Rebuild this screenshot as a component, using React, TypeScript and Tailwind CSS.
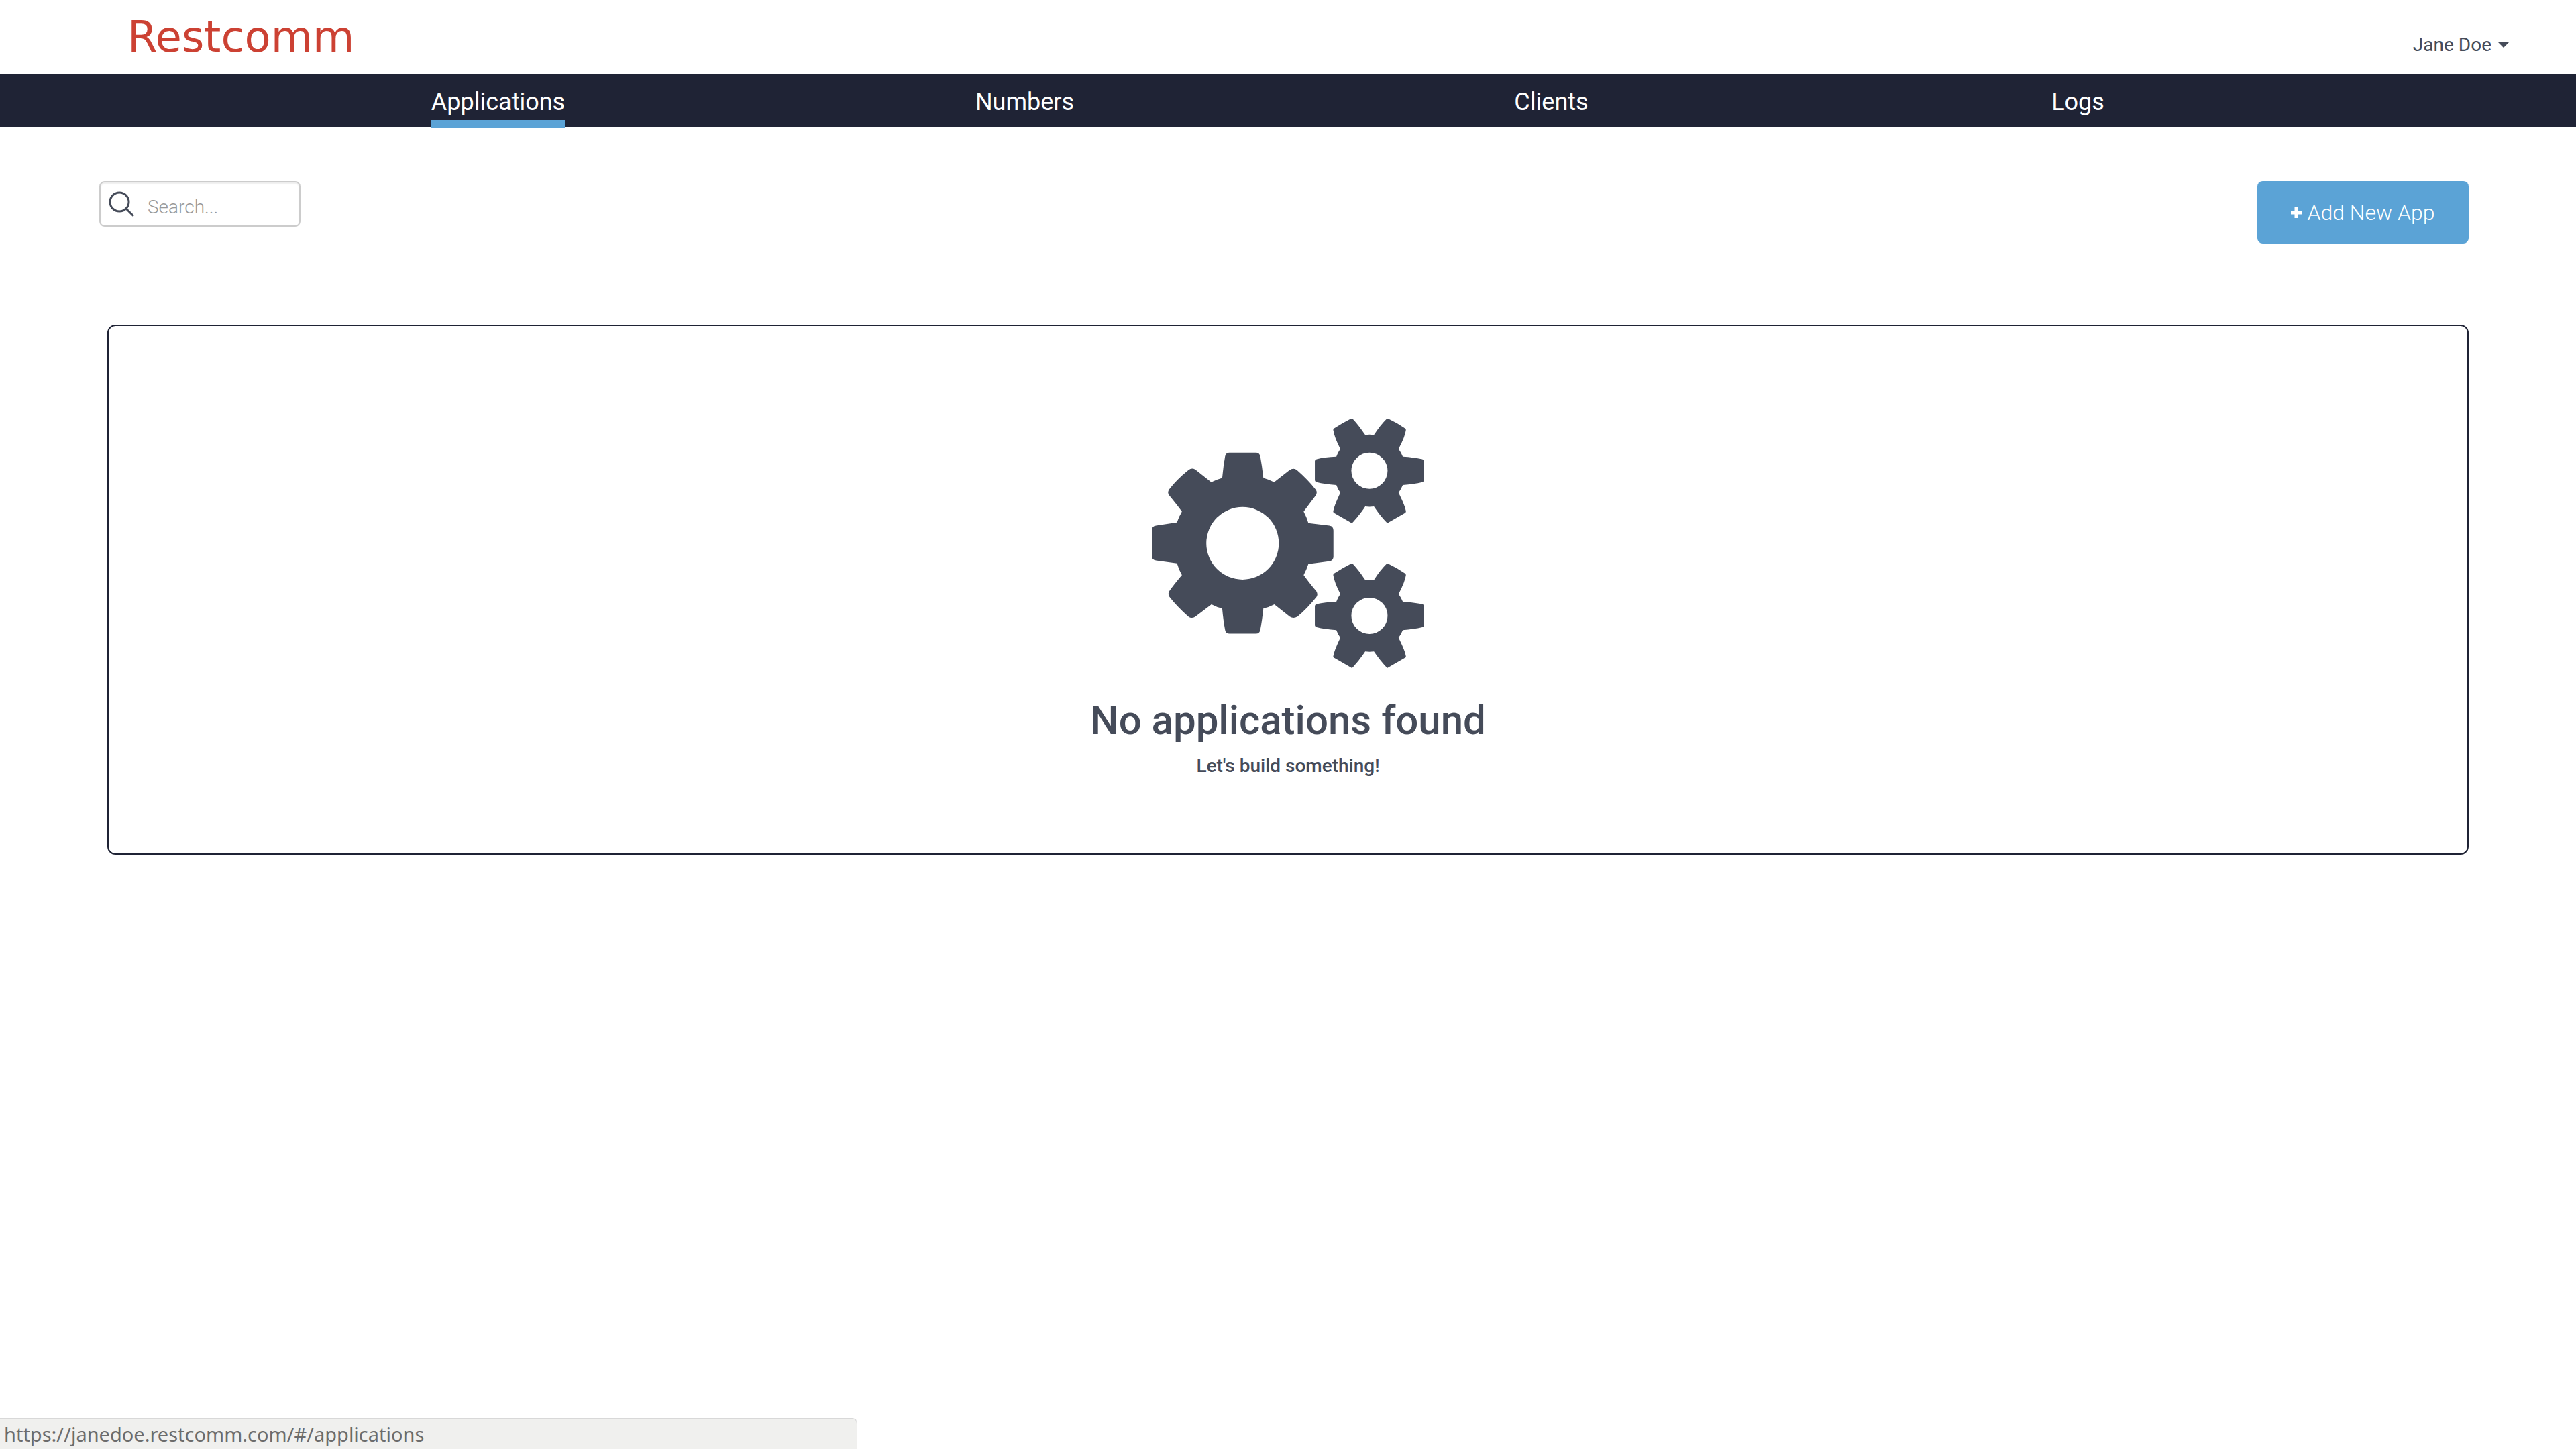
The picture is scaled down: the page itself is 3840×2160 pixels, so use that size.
const navItems = ["Applications", "Numbers", "Clients", "Logs"];

const bigGear =
  "M458 225H577Q592 225 596 241Q604 285 610 338Q636 345 658 357L726 304Q744 291 760 303Q810 347 843 389Q853 402 844 416L790 488Q803 512 811 540L905 551Q923 554 923 573V690Q923 706 908 710L811 723Q803 748 790 772Q822 816 846 843Q856 857 847 870Q806 921 762 958Q744 968 728 958L659 903Q636 915 610 921Q604 976 596 1018Q592 1034 577 1034H458Q442 1034 439 1018Q431 976 426 921Q400 915 378 903L307 957Q291 970 274 957Q222 910 191 870Q181 857 190 843Q212 812 246 772Q232 748 224 720L130 707Q112 704 112 688V570Q112 554 130 551L224 537Q232 512 246 488Q215 447 190 417Q179 405 189 389Q224 344 275 303Q291 291 306 301L377 357Q400 345 426 338Q431 285 439 241Q443 225 458 225Z";

const smallGear =
  "M149-63Q198-60 236-52Q244-49 244-44V43Q244 48 236 51Q198 60 149 64Q142 81 130 98Q161 160 163 183L161 187L83 232Q80 235 76 230Q50 204 20 160Q0 162-19 160Q-46 200-74 230Q-79 235-82 232L-160 187L-162 183Q-159 158-130 98Q-142 81-148 64Q-200 60-236 51Q-244 48-244 43V-44Q-244-49-236-52Q-200-61-148-63Q-142-80-130-97Q-157-150-162-183L-160-188Q-120-214-82-233Q-79-235-74-231Q-50-206-19-160Q0-163 20-160Q49-205 76-231Q80-235 83-233Q122-215 161-188L163-183Q160-155 130-97Q142-80 149-63Z";

const smallGearCenters = [306, 954];

function GearsIcon() {
  return (
    <svg viewBox="112 73 1216 1115" className="h-[372px] w-[406px] fill-[#454b59]" aria-hidden="true">
      <path d={bigGear} />
      <circle cx="517" cy="630" r="162" className="fill-white" />
      {smallGearCenters.map((cy) => (
        <g key={cy} transform={`translate(1084 ${cy})`}>
          <path d={smallGear} />
          <circle r="81" className="fill-white" />
        </g>
      ))}
    </svg>
  );
}

function SearchIcon() {
  return (
    <svg viewBox="0 0 38 38" className="size-[38px] shrink-0 fill-none stroke-[#454b59] stroke-3" aria-hidden="true">
      <circle cx="16" cy="16" r="14" />
      <path d="M26 26L36 36" strokeLinecap="round" />
    </svg>
  );
}

export default function App() {
  return (
    <div className="min-h-screen bg-white font-[Roboto,sans-serif] text-[#454b59]">
      <header className="flex h-[110px] items-center justify-between pr-[100px] pl-[190px]">
        <a href="#/" className="font-['DejaVu_Sans',sans-serif] text-[64px] leading-[110px] text-[#cc4133]">
          Restcomm
        </a>
        <button type="button" className="mt-6 flex items-center gap-2.5 text-[28px] leading-10">
          Jane Doe
          <svg viewBox="0 0 16 8" className="h-2 w-4 fill-current" aria-hidden="true">
            <path d="M0 0H16L8 8Z" />
          </svg>
        </button>
      </header>

      <nav className="flex h-20 border-b border-[#201a2c] bg-[#1f2335] px-[350px]">
        {navItems.map((item, index) => (
          <div key={item} className="flex flex-1 justify-center">
            <a
              href={`#/${item.toLowerCase()}`}
              aria-current={index === 0 ? "page" : undefined}
              className="h-[81px] border-b-12 border-transparent pt-[18px] text-[36px] leading-[48px] text-white aria-[current=page]:border-[#5ba3d6]"
            >
              {item}
            </a>
          </div>
        ))}
      </nav>

      <main className="px-40 pt-20">
        <div className="flex items-start justify-between">
          <label className="-ml-3 flex h-[68px] w-[300px] items-center gap-5 rounded-lg border-2 border-[#ccc] pl-3 shadow-[inset_0_2px_2px_rgba(0,0,0,0.075)]">
            <SearchIcon />
            <input
              type="text"
              aria-label="Search"
              placeholder="Search..."
              className="mt-2.5 w-full min-w-0 bg-transparent text-[28px] leading-10 font-light outline-none placeholder:text-[#999]"
            />
          </label>
          <button
            type="button"
            className="flex h-[93px] w-[315px] items-center justify-center gap-2 rounded-lg bg-[#5ba3d6] text-[32px] font-light text-white"
          >
            <svg viewBox="0 0 16 16" className="size-4 fill-current" aria-hidden="true">
              <path d="M5.500 0H10.500V5.500H16V10.500H10.500V16H5.500V10.500H0V5.500H5.500Z" />
            </svg>
            Add New App
          </button>
        </div>

        <section className="mt-[121px] flex flex-col items-center rounded-xl border-2 border-[#1f2335] pt-[138px] pb-[110px] text-center font-medium">
          <GearsIcon />
          <h1 className="mt-[42px] text-[60px] leading-[72px]">No applications found</h1>
          <p className="mt-3 text-[28px] leading-10">Let's build something!</p>
        </section>
      </main>

      <div className="fixed bottom-0 left-0 h-[46px] w-[1278px] rounded-tr-lg border-t border-r border-[#d8d8d8] bg-[#f0f0ee] pl-1.5 font-['Noto_Sans',sans-serif] text-[29px] leading-[46px] text-[#6c6c6c]">
        https://janedoe.restcomm.com/#/applications
      </div>
    </div>
  );
}
